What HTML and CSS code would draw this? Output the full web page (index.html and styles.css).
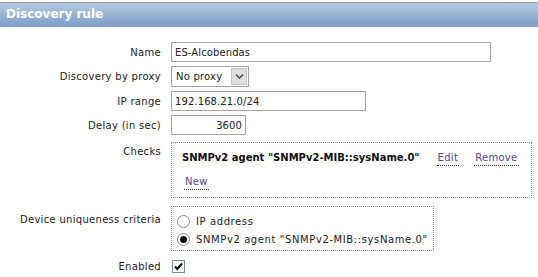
FILE: index.html
```html
<!DOCTYPE html>
<html lang="en">
<head>
  <meta charset="UTF-8" />
  <title>Discovery rule</title>
  <link rel="stylesheet" href="styles.css">
</head>
<body>

  <header class="form-header">Discovery rule</header>

  <!-- Formulario -->
  <div class="form-list">
    <div class="form-row">
      <label class="form-label" for="name">Name</label>
      <input class="text-input input-name" id="name" type="text" value="ES-Alcobendas" />
    </div>

    <div class="form-row">
      <span class="form-label">Discovery by proxy</span>
      <div class="select-box">
        <span class="select-value">No proxy</span>
        <span class="select-arrow">
          <svg width="9" height="7" viewBox="0 0 9 7"><path d="M1 1.5 L4.5 5 L8 1.5" fill="none" stroke="#555" stroke-width="1.6"/></svg>
        </span>
      </div>
    </div>

    <div class="form-row">
      <label class="form-label" for="iprange">IP range</label>
      <input class="text-input input-ip" id="iprange" type="text" value="192.168.21.0/24" />
    </div>

    <div class="form-row">
      <label class="form-label" for="delay">Delay (in sec)</label>
      <input class="text-input input-delay" id="delay" type="text" value="3600" />
    </div>

    <div class="form-row row-checks">
      <span class="form-label">Checks</span>
      <div class="dotted-box checks-box">
        <div class="check-line">
          <span class="check-name">SNMPv2 agent "SNMPv2-MIB::sysName.0"</span>
          <a href="#" class="link link-edit">Edit</a>
          <a href="#" class="link">Remove</a>
        </div>
        <div class="check-line">
          <a href="#" class="link link-new">New</a>
        </div>
      </div>
    </div>

    <div class="form-row row-unique">
      <span class="form-label">Device uniqueness criteria</span>
      <div class="dotted-box unique-box">
        <div class="radio-line"><span class="radio"></span>IP address</div>
        <div class="radio-line"><span class="radio is-checked"></span>SNMPv2 agent "SNMPv2-MIB::sysName.0"</div>
      </div>
    </div>

    <div class="form-row row-enabled">
      <span class="form-label">Enabled</span>
      <span class="checkbox">
        <svg width="11" height="11" viewBox="0 0 11 11"><path d="M2 5.5 L4.3 8 L9 2.5" fill="none" stroke="#000" stroke-width="2"/></svg>
      </span>
    </div>
  </div>

</body>
</html>
```

FILE: styles.css
```css
* { box-sizing: border-box; margin: 0; padding: 0; }

body {
  background-color: #fffffd;
  color: #222;
  font-family: 'DejaVu Sans', Verdana, sans-serif;
  font-size: 10px;
}

.form-header {
  margin-top: 2px;
  height: 25px;
  border-top: 1px solid #8d9db0;
  background: linear-gradient(#b5c9df, #7b9dc6);
  color: #fff;
  font-weight: bold;
  font-size: 12px;
  line-height: 23px;
  padding-left: 6px;
}

.form-list {
  margin-top: 15px;
}

.form-row {
  display: flex;
  align-items: center;
  margin-bottom: 4px;
}

.form-label {
  width: 171px;
  padding-right: 10px;
  text-align: right;
  letter-spacing: 0.3px;
}

.text-input {
  height: 20px;
  border: 1px solid #a4a4a4;
  background: #fffffd;
  font-family: inherit;
  font-size: 10px;
  color: #222;
  padding: 0 3px;
  outline: none;
  letter-spacing: 0.1px;
}

.input-name { width: 320px; }
.input-ip { width: 195px; }
.input-delay { width: 75px; text-align: right; }

.select-box {
  display: flex;
  align-items: center;
  width: 78px;
  height: 21px;
  border: 1px solid #a4a4a4;
  background: #fffffd;
  padding-left: 4px;
}

.select-value {
  flex: 1;
  letter-spacing: 0.2px;
}

.select-arrow {
  display: flex;
  align-items: center;
  justify-content: center;
  width: 16px;
  height: 17px;
  margin-right: 1px;
  background: #dedede;
  border: 1px solid #c4c4c4;
}

.row-checks {
  margin-top: 7px;
  align-items: flex-start;
}

.row-checks .form-label {
  padding-top: 4px;
}

.dotted-box {
  border: 1px dotted #8a8a8a;
}

.checks-box {
  width: 361px;
  height: 56px;
  padding: 5px 10px 0;
}

.check-line {
  display: flex;
  align-items: center;
  height: 18px;
  margin-bottom: 6px;
}

.check-name {
  font-weight: bold;
  color: #111;
}

.link {
  color: #4e4888;
  text-decoration: none;
  border-bottom: 1px dotted #333;
  padding: 0 1px 2px;
  margin-top: 4px;
  letter-spacing: 0.3px;
}

.link-edit {
  margin-left: 17px;
  margin-right: 15px;
}

.link-new {
  margin-left: 2px;
}

.row-unique {
  margin-top: 8px;
  align-items: flex-start;
}

.row-unique .form-label {
  padding-top: 8px;
}

.unique-box {
  width: 263px;
  height: 45px;
  padding: 5px 5px 0;
}

.radio-line {
  display: flex;
  align-items: center;
  height: 18px;
  letter-spacing: 0.6px;
}

.radio {
  width: 13px;
  height: 13px;
  border: 1px solid #8e8e8e;
  border-radius: 50%;
  background: #fff;
  margin-right: 6px;
  position: relative;
}

.radio.is-checked::after {
  content: '';
  position: absolute;
  top: 2px;
  left: 2px;
  width: 7px;
  height: 7px;
  border-radius: 50%;
  background: #111;
}

.row-enabled {
  margin-top: 9px;
}

.checkbox {
  display: flex;
  align-items: center;
  justify-content: center;
  width: 13px;
  height: 13px;
  border: 1px solid #7a8a99;
  background: #fff;
  margin-left: 1px;
}
```
